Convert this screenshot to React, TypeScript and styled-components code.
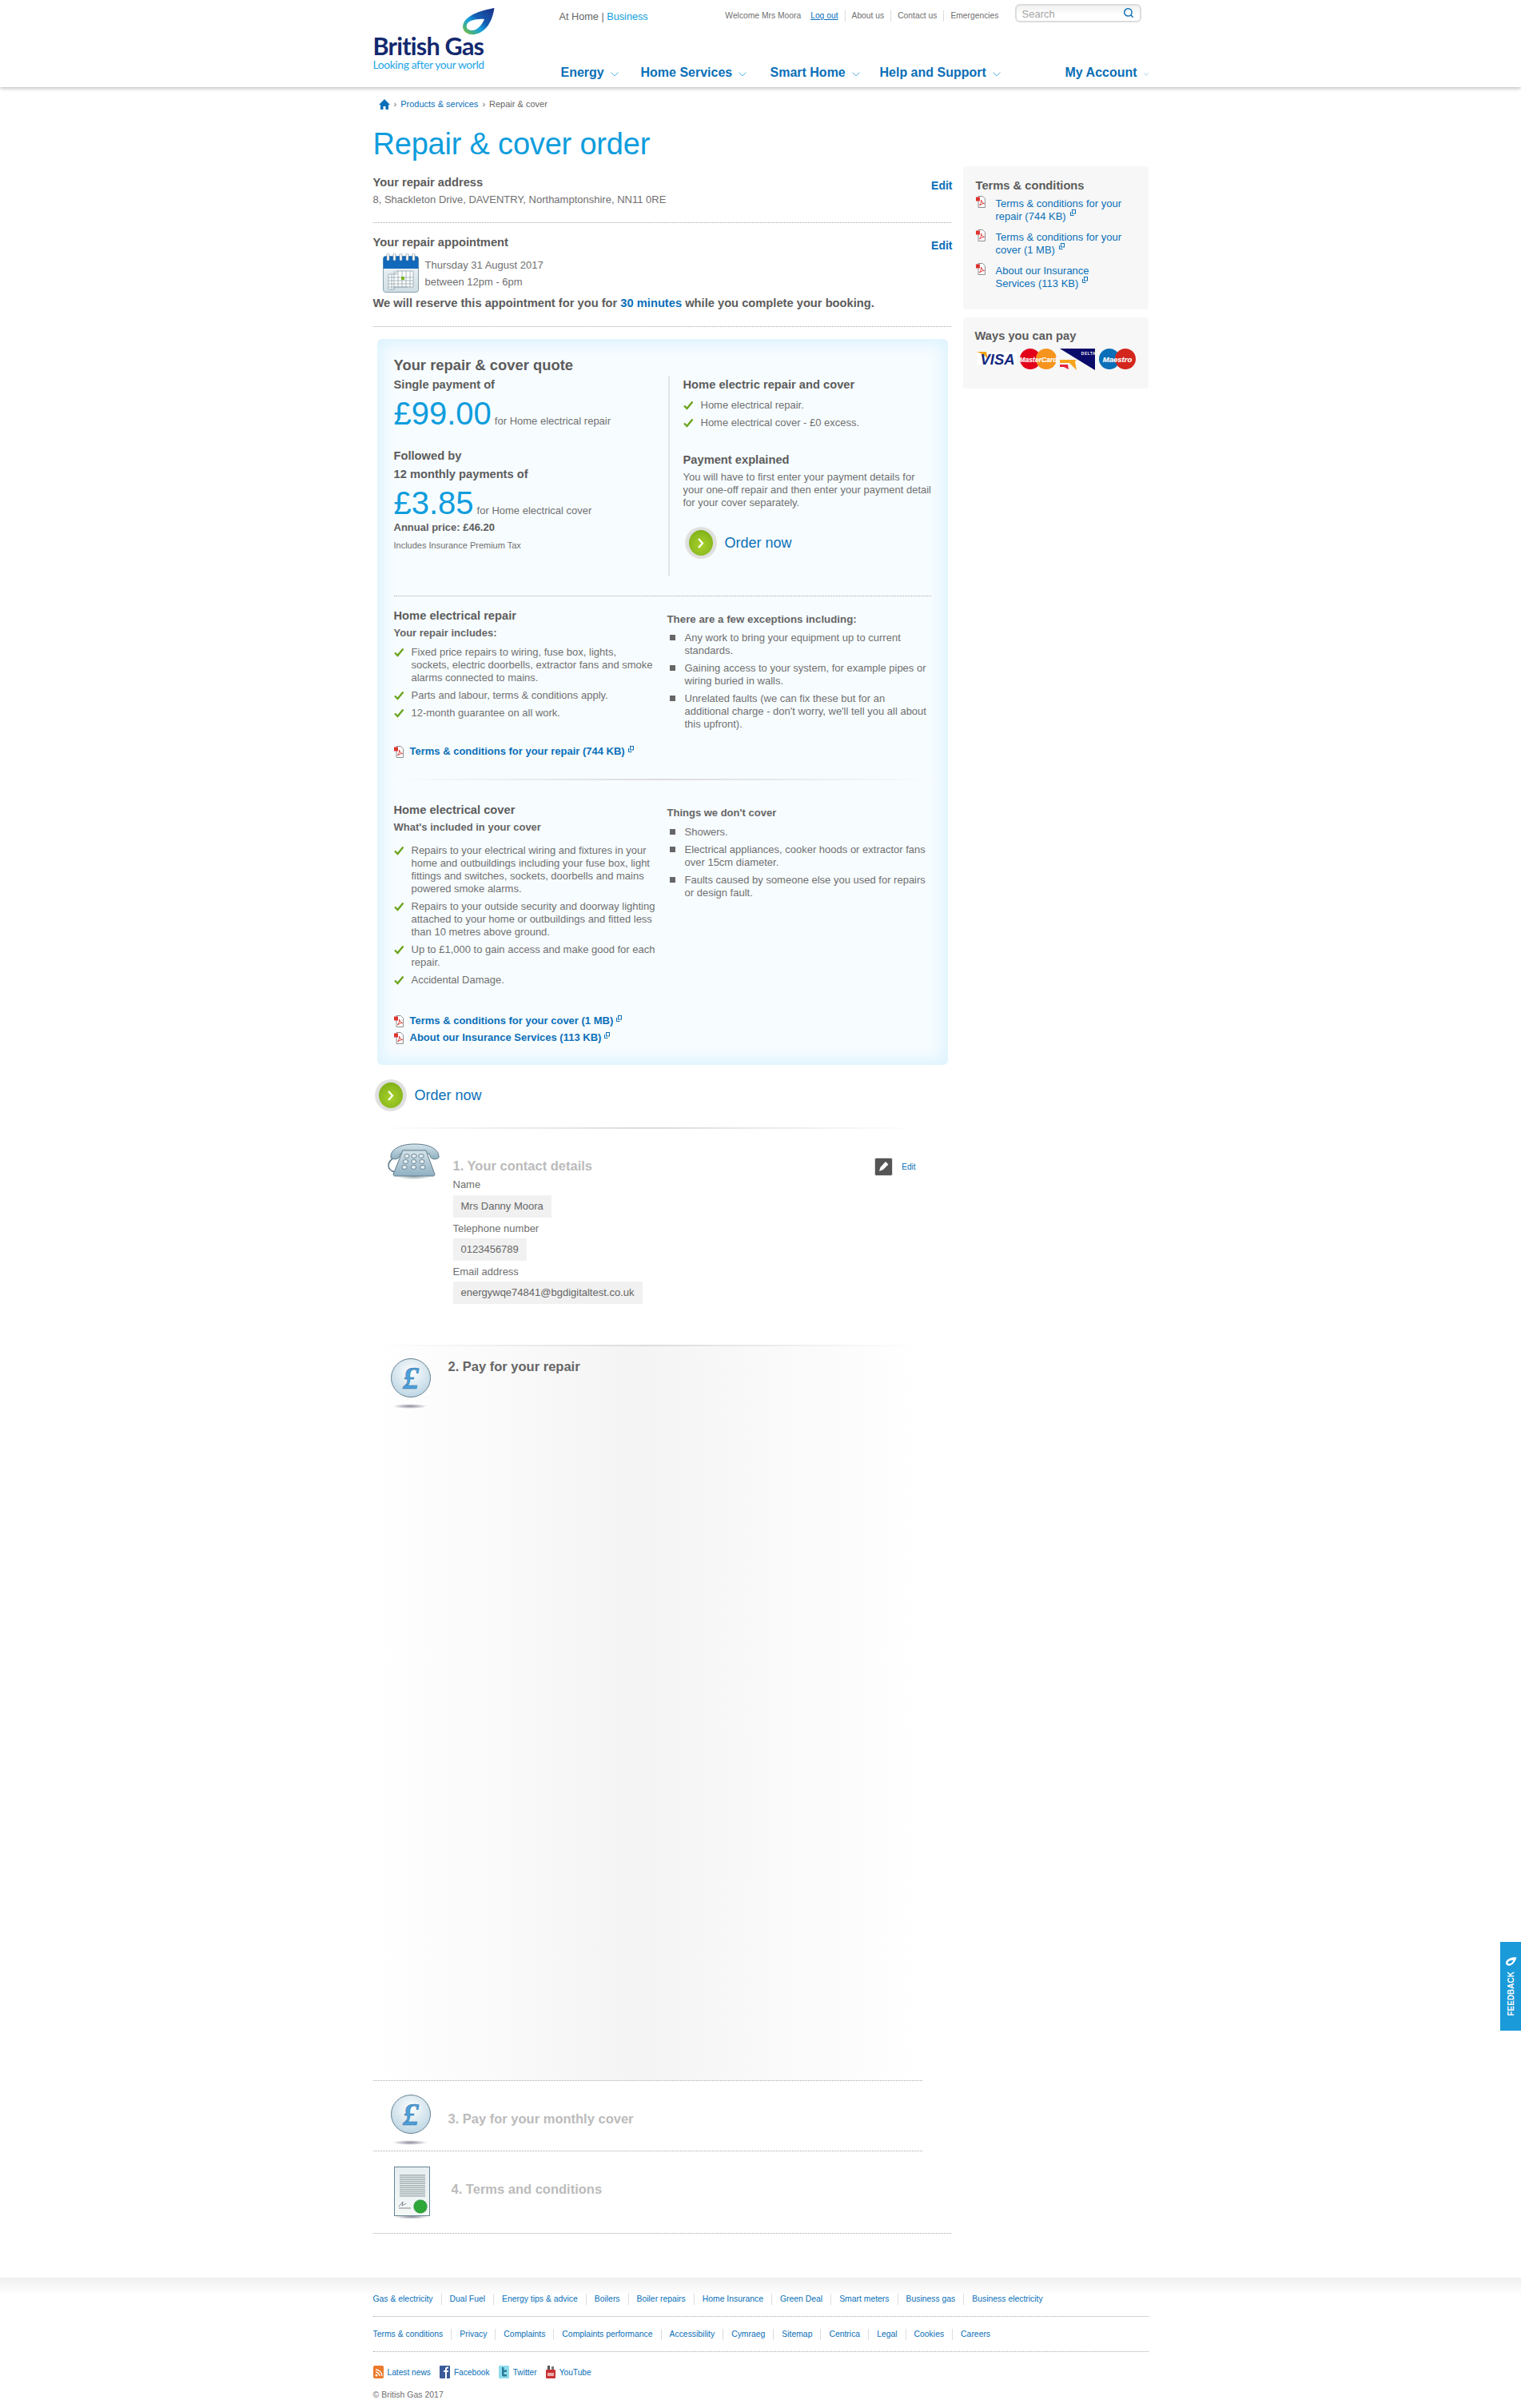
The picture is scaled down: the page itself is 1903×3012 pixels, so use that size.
import React from "react";
import styled, { createGlobalStyle } from "styled-components";
import { Search as SearchGlyph } from "lucide-react";

const Global = createGlobalStyle`
  html, body { margin: 0; padding: 0; background: #fff; }
  body { font-family: "Liberation Sans", Arial, sans-serif; color: #707070; font-size: 13px; }
  * { box-sizing: border-box; }
  a { text-decoration: none; color: inherit; }
  ul, p, h1, h2, h3, h4 { margin: 0; padding: 0; }
  li { list-style: none; }
`;

const LINK = "#0a6fb8";
const SKY = "#0f9ddd";

const Page = styled.div`position: relative; width: 1903px; height: 3012px; overflow: hidden;`;
const HeaderBar = styled.header`height: 109px; background: #fff; box-shadow: 0 1px 5px rgba(0,0,0,.32);position:relative;`;
const Wrap = styled.div`width: 970px; margin: 0 auto;`;
const HeaderInner = styled(Wrap)`display: grid; grid-template-columns: 233px 737px; height: 109px;`;
const LogoBox = styled.a`display: block; padding-top: 10px; width: 160px;`;
const FlameSvg = styled.svg`display: block; margin-left: 111px; width: 41px; height: 35px;`;
const LogoName = styled.div`font-family: "Lato", sans-serif; font-weight: 700; font-size: 30.500px; line-height: 25px; color: #12296e; letter-spacing: -.75px; white-space: nowrap;`;
const LogoTag = styled.div`font-family: "Lato", sans-serif; font-size: 13.800px; line-height: 17px; color: #1ca5e6; letter-spacing: -.35px; white-space: nowrap; margin-top: 2px;`;
const HeaderRight = styled.div`display: flex; flex-direction: column; justify-content: space-between; padding: 5px 0 8px;`;
const TopRow = styled.div`display: flex; align-items: flex-start;`;
const Audience = styled.div`font-size: 12.700px; line-height: 18px; margin-top: 7px; color: #666; b { font-weight: normal; } a { color: ${SKY}; }`;
const Util = styled.ul`display: flex; margin-left: auto; margin-top: 8px; font-size: 10.300px; line-height: 14px; color: #707070;`;
const UtilItem = styled.li<{ $first?: boolean }>`padding: 0 8px; border-left: ${p => p.$first ? "none" : "1px solid #ddd"}; white-space: nowrap; u { color: ${LINK}; margin-left: 12px; }`;
const SearchBox = styled.div`width: 158px; height: 23px; margin: 0 9px 0 12px; border: 2px solid #dcdcdc; border-radius: 6px; background: linear-gradient(#f0f0f0, #fff 60%); display: flex; align-items: center; justify-content: space-between; padding: 2px 7px 0; color: #a5a5a5; font-size: 13px; svg { color: ${LINK}; margin-top: -3px; }`;
const Nav = styled.nav`display: flex; padding-left: 2px;`;
const NavItem = styled.a<{ $w: number }>`width: ${p => p.$w}px; display: flex; align-items: center; gap: 8px; font-size: 16px; font-weight: bold; line-height: 20px; color: ${LINK}; white-space: nowrap;`;
const Crumbs = styled.div`display: flex; align-items: center; height: 14px; margin-top: 14px; padding-left: 7px; font-size: 11px; line-height: 14px; color: #666; gap: 5px; a { color: ${LINK}; }`;
const Title = styled.h1`font-size: 38px; line-height: 46px; font-weight: normal; color: ${SKY}; margin-top: 20px; letter-spacing: -.2px;`;
const Columns = styled.div`display: grid; grid-template-columns: 723px 232px; column-gap: 15px;`;
const MainCol = styled.main`min-width: 0;`;
const Row = styled.div<{ $top: number }>`display: flex; justify-content: space-between; height: ${p => p.$top + 18}px; padding-top: ${p => p.$top}px;`;
const H4 = styled.h4<{ $mt?: number }>`font-size: 14.700px; line-height: 18px; font-weight: bold; color: #5c5c5c; margin-top: ${p => p.$mt ?? 0}px; white-space: nowrap;`;
const EditLink = styled.a`font-size: 14px; line-height: 18px; font-weight: bold; color: ${LINK}; margin-top: 4px; margin-right: -2px;`;
const Address = styled.p`font-size: 13px; line-height: 16px; margin-top: 5px;`;
const Dotted = styled.div<{ $mt: number; $w?: number }>`height: 1px; border-top: 1px dotted #a9a9a9; margin-top: ${p => p.$mt}px; ${p => p.$w ? `width: ${p.$w}px;` : ""}`;
const Appt = styled.div`display: flex; gap: 8px; margin: 5px 0 0 12px;`;
const ApptText = styled.div`font-size: 13px; line-height: 21px; padding-top: 4px;`;
const Reserve = styled.p`font-size: 14.700px; line-height: 18px; font-weight: bold; color: #5c5c5c; margin-top: 4px; span { color: ${LINK}; }`;
const Panel = styled.section`width: 714px; margin: 15px 0 0 5px; padding: 22px 21px 26px; border-radius: 6px; background: #f7fcff; box-shadow: inset 0 0 18px 7px #def3fe;`;
const PanelTitle = styled.h3`font-size: 18.400px; line-height: 22px; font-weight: bold; color: #5c5c5c;`;
const Quote = styled.div`display: grid; grid-template-columns: 345px 327px; margin-top: 2px; height: 250px;`;
const QuoteLeft = styled.div`border-right: 2px solid #dfe5e8; padding-top: 2px;`;
const QuoteRight = styled.div`padding: 2px 0 0 17px;`;
const PriceRow = styled.div<{ $mt: number }>`display: flex; align-items: baseline; gap: 4px; margin-top: ${p => p.$mt}px; font-size: 13px; white-space: nowrap;`;
const Price = styled.span`font-size: 40px; line-height: 46px; color: ${SKY};`;
const Annual = styled.p`font-size: 13px; line-height: 16px; font-weight: bold; color: #5c5c5c;`;
const Small = styled.p`font-size: 11px; line-height: 14px; margin-top: 7px;`;
const Ticks = styled.ul<{ $mt: number; $gap?: number }>`margin-top: ${p => p.$mt}px; display: flex; flex-direction: column; gap: ${p => p.$gap ?? 6}px;`;
const Tick = styled.li`display: flex; gap: 9px; font-size: 13px; line-height: 16px; white-space: nowrap; svg { flex: none; margin-top: 2px; }`;
const Square = styled.i`flex: none; width: 7px; height: 7px; background: #666; margin: 4px 3px 0 3px;`;
const Para = styled.p`font-size: 13px; line-height: 16px; margin-top: 5px; white-space: nowrap;`;
const OrderBtn = styled.a<{ $mt: number }>`display: inline-flex; align-items: center; gap: 10px; margin: ${p => p.$mt}px 0 0 2px; font-size: 18px; line-height: 40px; color: ${LINK};`;
const OrderRing = styled.span`width: 40px; height: 40px; border-radius: 50%; background: radial-gradient(circle, #dedede 60%, #f1f1f1 100%); display: flex; align-items: center; justify-content: center;`;
const OrderDot = styled.span`width: 30px; height: 32px; border-radius: 50%; background: radial-gradient(circle at 50% 60%, #a6d02a, #86b51c 70%, #6f9f12); display: flex; align-items: center; justify-content: center;`;
const DetailGrid = styled.div`display: grid; grid-template-columns: 342px 330px;`;
const SubH = styled.h4<{ $mt: number; $w?: number }>`font-size: ${p => p.$w ?? 13}px; line-height: 18px; font-weight: bold; color: #666; margin-top: ${p => p.$mt}px; white-space: nowrap;`;
const PdfLink = styled.a<{ $mt: number }>`display: flex; align-items: center; gap: 8px; margin-top: ${p => p.$mt}px; font-size: 13px; line-height: 16px; font-weight: bold; color: ${LINK}; white-space: nowrap; sup { line-height: 0; margin-left: -4px; align-self: flex-start; margin-top: 1px; }`;
const Soft = styled.div<{ $mt: number; $w?: number }>`height: 2px; margin-top: ${p => p.$mt}px; width: ${p => p.$w ? `${p.$w}px` : "100%"}; background: linear-gradient(90deg, #fff0, #dcdcdc 50%, #fff0);`;
const StepHead = styled.h3<{ $mute?: boolean }>`font-size: 16.500px; line-height: 20px; font-weight: bold; color: ${p => p.$mute ? "#bbb" : "#666"}; white-space: nowrap;`;
const Contact = styled.section`display: flex; width: 687px; padding-left: 18px;`;
const ContactIcon = styled.div`width: 82px; padding-top: 18px; flex: none;`;
const ContactBody = styled.div`flex: 1; padding-top: 36px;`;
const ContactRow = styled.div`display: flex; justify-content: space-between; height: 20px;`;
const EditGroup = styled.a`display: flex; gap: 11px; padding-right: 8px; font-size: 10px; line-height: 24px; color: ${LINK};`;
const FieldLabel = styled.div<{ $mt?: number }>`font-size: 13px; line-height: 16px; margin-top: ${p => p.$mt ?? 6}px;`;
const FieldValue = styled.div<{ $mt?: number }>`display: table; height: 28px; line-height: 28px; margin-top: ${p => p.$mt ?? 4}px; padding: 0 10px; background: #f1f1f1; font-size: 13px; color: #666;`;
const PayBlock = styled.section`display: flex; width: 687px; height: 918px; padding: 15px 0 0 22px; gap: 22px; background: linear-gradient(90deg, #fff 0%, #f4f4f4 48%, #fff 100%);`;
const PlainStep = styled.section<{ $h: number; $pt: number; $pl: number; $gap: number; $headTop: number }>`display: flex; height: ${p => p.$h}px; padding: ${p => p.$pt}px 0 0 ${p => p.$pl}px; gap: ${p => p.$gap}px; h3 { margin-top: ${p => p.$headTop}px; }`;
const Aside = styled.aside`padding-top: 5px;`;
const SideBox = styled.div<{ $mt?: number }>`background: #f7f7f7; border-radius: 4px; margin-top: ${p => p.$mt ?? 0}px;`;
const TermsBox = styled(SideBox)`height: 179px; padding: 15px 16px 0;`;
const SideList = styled.ul`margin-top: 6px; display: flex; flex-direction: column; gap: 10px;`;
const SideItem = styled.li`display: flex; gap: 13px; font-size: 13px; line-height: 16px; color: ${LINK}; svg:first-child { flex: none; margin-top: -2px; } sup { line-height: 0; margin-left: 5px; }`;
const PayBox = styled(SideBox)`height: 89px; padding: 14px 0 0 15px;`;
const Cards = styled.div`display: flex; align-items: center; margin: 7px 0 0 2px; gap: 4px; height: 26px;`;
const Footer = styled.footer`margin-top: 55px; height: 163px; padding-top: 20px; background: linear-gradient(#f0f0f0, #fff 22px);`;
const FootLinks = styled.ul<{ $mt?: number }>`display: flex; font-size: 10.400px; line-height: 14px; color: ${LINK}; margin-top: ${p => p.$mt ?? 0}px;`;
const FootItem = styled.li<{ $first?: boolean }>`padding: ${p => p.$first ? "0 10px 0 0" : "0 10px"}; border-left: ${p => p.$first ? "none" : "1px solid #ddd"}; white-space: nowrap;`;
const Social = styled.div`display: flex; align-items: center; height: 16px; margin-top: 17px; font-size: 10.200px; color: ${LINK}; gap: 11px;`;
const SocialItem = styled.a`display: flex; align-items: center; gap: 5px;`;
const Copy = styled.p`font-size: 10.500px; line-height: 14px; margin-top: 13px; color: #707070;`;
const Feedback = styled.a`position: absolute; top: 2429px; right: 0; width: 26px; height: 111px; background: #1a9ad9; color: #fff; display: flex; flex-direction: column-reverse; align-items: center; justify-content: center; gap: 6px; font-size: 10px; font-weight: bold; span { writing-mode: vertical-rl; transform: rotate(180deg); }`;

const Flame = () => (
  <FlameSvg viewBox="0 0 41 35">
    <defs>
      <linearGradient id="fl" x1="1" y1="0" x2="0" y2="1">
        <stop offset="0" stopColor="#1b2f86" /><stop offset=".45" stopColor="#1460b4" /><stop offset=".62" stopColor="#16a0e0" /><stop offset=".8" stopColor="#3fb08e" /><stop offset="1" stopColor="#9ac81c" />
      </linearGradient>
    </defs>
    <path d="M40.500 0C26 3 8 7 2 19c-4 9 5 16 14 14C31 30 38 16 40.500 0Z" fill="url(#fl)" />
    <path d="M6 21c1-5 12-8 22-7-3 8-10 15-17 14-4-1-6-3-5-7Z" fill="#fff" />
  </FlameSvg>
);

const Chevron = () => (
  <svg width="10" height="6" viewBox="0 0 10 6" style={{ marginTop: 3 }}><path d="M.5.5 5 5 9.500.5" fill="none" stroke="#57b4e4" strokeWidth="1" /></svg>
);
const Home = () => (
  <svg width="14" height="13" viewBox="0 0 14 13"><path d="M7 0 14 7h-2v6H8.500V9h-3v4H2V7H0Z" fill="#0a6fb8" /></svg>
);
const Pdf = () => (
  <svg width="12" height="15" viewBox="0 0 12 15">
    <path d="M3 .5h5.500L11.500 3.500v11H3Z" fill="#fff" stroke="#8f8f8f" />
    <rect x="0" y="1.500" width="5" height="5" fill="#e0332f" />
    <path d="M4.500 12c2-3 2.500-5 2-7 1 3 2 4 4 4.500-2 0-4 1-6 2.500Z" fill="none" stroke="#d8322d" strokeWidth=".9" />
  </svg>
);
const Ext = () => (
  <svg width="7" height="8" viewBox="0 0 7 8"><rect x="2.500" y=".5" width="4" height="4.500" fill="#fff" stroke="#0a6fb8" /><path d="M.5 3v4.500H4.500" fill="none" stroke="#0a6fb8" /></svg>
);
const Check = () => (
  <svg width="13" height="12" viewBox="0 0 13 12"><path d="M1 6.500 4.500 10 11.500 1.500" fill="none" stroke="#6ba51d" strokeWidth="2.400" /></svg>
);
const Arrow = () => (
  <svg width="9" height="15" viewBox="0 0 9 15"><path d="M2 2l5 5.500L2 13" fill="none" stroke="#fff" strokeWidth="2.200" /></svg>
);
const Calendar = () => (
  <svg width="45" height="49" viewBox="0 0 45 49" style={{ flex: "none" }}>
    <defs><linearGradient id="calb" x1="0" y1="0" x2="0" y2="1"><stop offset="0" stopColor="#f4f8fa" /><stop offset="1" stopColor="#cfdde4" /></linearGradient></defs>
    <rect x=".5" y="3.500" width="44" height="45" rx="3" fill="url(#calb)" stroke="#8aa2ae" />
    <path d="M.5 19V6.500a3 3 0 0 1 3-3h38a3 3 0 0 1 3 3V19Z" fill="#1268bb" />
    {[5, 13, 21, 29, 37].map(x => <rect key={x} x={x} y="0" width="3" height="9" rx="1.500" fill="#fff" stroke="#7b8f9a" strokeWidth=".7" />)}
    <path d="M7 26h10v-4h21v20H14v3H7ZM7 30h31M7 34h31M7 38h31M7 42h24M11 26v19M14 22v23M19 22v20M24 22v20M29 22v20M34 22v20" fill="#fff" stroke="#93a4ad" strokeWidth=".8" />
    <rect x="23" y="29" width="4" height="4" fill="#7ab51d" />
  </svg>
);
const Phone = () => (
  <svg width="65" height="46" viewBox="0 0 65 46">
    <defs>
      <linearGradient id="phb" x1="0" y1="0" x2="0" y2="1"><stop offset="0" stopColor="#d4e3ea" /><stop offset="1" stopColor="#8fb0c2" /></linearGradient>
      <radialGradient id="phs"><stop offset="0" stopColor="#9aa" /><stop offset="1" stopColor="#fff" /></radialGradient>
    </defs>
    <ellipse cx="33" cy="42" rx="22" ry="3.500" fill="url(#phs)" />
    <path d="M10 17C6 19 1 22 1 28c0 5 4 7 8 8" fill="none" stroke="#5e7a8a" strokeWidth="1.500" />
    <path d="M4 18C3 8 15 1 34 1s31 7 30 17c-4 3-8 2-10 0l-2-5H16l-2 5c-2 2-6 3-10 0Z" fill="url(#phb)" stroke="#5e7a8a" />
    <path d="M19 9h29l11 30c0 1-1 2-2 2H9c-1 0-2-1-2-2Z" fill="url(#phb)" stroke="#5e7a8a" />
    {[0, 1, 2].flatMap(r => [0, 1, 2].map(c => <ellipse key={`${r}${c}`} cx={24 + c * 9 - r * 1.500 + c * r * 1.200} cy={16 + r * 7} rx="3.200" ry="2.500" fill="#e4eef2" stroke="#54707f" strokeWidth=".8" />))}
  </svg>
);
const Coin = ({ id }: { id: string }) => (
  <svg width="50" height="66" viewBox="0 0 50 66" style={{ flex: "none" }}>
    <defs>
      <radialGradient id={id} cx=".5" cy=".35" r=".7"><stop offset="0" stopColor="#fff" /><stop offset="1" stopColor="#b8d3e2" /></radialGradient>
      <radialGradient id={id + "s"}><stop offset="0" stopColor="#889" /><stop offset="1" stopColor="#fff" /></radialGradient>
    </defs>
    <ellipse cx="25" cy="24.500" rx="24.500" ry="24" fill={`url(#${id})`} stroke="#65808f" />
    <text x="25" y="38" textAnchor="middle" fontFamily="'Liberation Serif', serif" fontSize="40" fontWeight="bold" fontStyle="italic" fill="#4d9fda" stroke="#2d6f9f" strokeWidth=".5">£</text>
    <ellipse cx="24" cy="60" rx="22" ry="3" fill={`url(#${id}s)`} />
  </svg>
);
const Doc = () => (
  <svg width="45" height="66" viewBox="0 0 45 66" style={{ flex: "none" }}>
    <defs>
      <linearGradient id="dcb" x1="0" y1="0" x2="0" y2="1"><stop offset="0" stopColor="#e7eef1" /><stop offset="1" stopColor="#f4f9f7" /></linearGradient>
      <radialGradient id="dcs"><stop offset="0" stopColor="#889" /><stop offset="1" stopColor="#fff" /></radialGradient>
    </defs>
    <ellipse cx="22" cy="63" rx="21" ry="2.500" fill="url(#dcs)" />
    <rect x=".5" y=".5" width="44" height="61" fill="url(#dcb)" stroke="#668494" />
    {Array.from({ length: 11 }, (_, i) => <rect key={i} x="7" y={10 + i * 2.600} width="32" height="1.600" fill="#a9b3b6" />)}
    <path d="M6 50 11 44 10 49 15 46M6 52h15" fill="none" stroke="#667" strokeWidth=".8" />
    <circle cx="33" cy="50" r="8" fill="#2da838" stroke="#1e8c2c" strokeDasharray="1.500 1" strokeWidth="1.500" />
  </svg>
);
const Pencil = () => (
  <svg width="23" height="23" viewBox="0 0 23 23" style={{ flex: "none" }}>
    <rect x=".5" y=".5" width="22" height="22" rx="2" fill="#555" stroke="#ddd" />
    <path d="M6 17l1.500-5L14 5l3.500 3.500L11 15Z" fill="#fff" />
  </svg>
);
const Visa = () => (
  <svg width="50" height="18" viewBox="0 0 50 18">
    <rect width="50" height="16" fill="#fff" />
    <path d="M0 0h12l2 9C11 5 6 2 0 0Z" fill="#f4a51c" />
    <text x="26" y="15.500" textAnchor="middle" fontFamily="'Liberation Sans', sans-serif" fontSize="18.500" fontWeight="bold" fontStyle="italic" fill="#14297f">VISA</text>
  </svg>
);
const Roundel = ({ a, b, label, size }: { a: string; b: string; label: string; size: number }) => (
  <svg width="46" height="26" viewBox="0 0 46 26">
    <circle cx="13" cy="13" r="13" fill={a} />
    <circle cx="33" cy="13" r="13" fill={b} />
    <text x="23" y="16.500" textAnchor="middle" fontFamily="'Liberation Sans', sans-serif" fontSize={size} fontWeight="bold" fontStyle="italic" fill="#fff" stroke="#fff" strokeWidth=".15">{label}</text>
  </svg>
);
const Delta = () => (
  <svg width="45" height="27" viewBox="0 0 45 27">
    <path d="M0 0h44v27Z" fill="#0b0b6b" />
    <path d="M0 14h21l-2 2 2 11-9-9H0Z" fill="#f7a51c" />
    <path d="M0 20h10l1 6-6-3H0Z" fill="#e8243c" />
    <text x="36" y="8" textAnchor="middle" fontFamily="'Liberation Sans', sans-serif" fontSize="4.800" fontWeight="bold" letterSpacing=".6" fill="#fff">DELTA</text>
  </svg>
);
const Rss = () => (
  <svg width="13" height="16" viewBox="0 0 13 16"><rect width="13" height="16" rx="2" fill="#ec7a2b" /><circle cx="4" cy="12" r="1.500" fill="#fff" /><path d="M3 8a5 5 0 0 1 5 5M3 5a8 8 0 0 1 8 8" fill="none" stroke="#fff" strokeWidth="1.300" /></svg>
);
const Fb = () => (
  <svg width="13" height="16" viewBox="0 0 13 16"><rect width="13" height="16" rx="1" fill="#3a5a98" /><path d="M7 16V8H5V6h2V4c0-1.500 1-2.500 3-2.500h1v2h-1c-.7 0-1 .3-1 1V6h2l-.3 2H9v8Z" fill="#fff" /></svg>
);
const Tw = () => (
  <svg width="13" height="16" viewBox="0 0 13 16"><rect width="13" height="16" rx="1" fill="#8fdcec" /><path d="M4 2h2.500v3.500H10V8H6.500v3H10v2.500H6c-1.500 0-2-1-2-2.500Z" fill="#2a7a9a" /></svg>
);
const Yt = () => (
  <svg width="12" height="16" viewBox="0 0 12 16"><rect y="5" width="12" height="11" rx="1" fill="#c93232" /><rect x="2" y="0" width="3" height="5" fill="#555" /><rect x="7" y="1" width="3" height="4" fill="#777" /><rect x="2" y="9" width="8" height="4" fill="#fff" opacity=".6" /></svg>
);
const Leaf = () => (
  <svg width="15" height="13" viewBox="0 0 13 11"><path d="M12.500 1C8 .5 2.500 2 1 6c-.6 2.500 1.500 4.500 4 4 4-.8 6.500-5 7.500-9ZM3 6.500C4 4.500 7 4 9 4 8 6.500 6.500 8 4.500 8 3.500 8 2.800 7.500 3 6.500Z" fill="#fff" fillRule="evenodd" /></svg>
);

const footerOne = ["Gas & electricity", "Dual Fuel", "Energy tips & advice", "Boilers", "Boiler repairs", "Home Insurance", "Green Deal", "Smart meters", "Business gas", "Business electricity"];
const footerTwo = ["Terms & conditions", "Privacy", "Complaints", "Complaints performance", "Accessibility", "Cymraeg", "Sitemap", "Centrica", "Legal", "Cookies", "Careers"];

const Order = ({ mt }: { mt: number }) => (
  <OrderBtn $mt={mt}><OrderRing><OrderDot><Arrow /></OrderDot></OrderRing>Order now</OrderBtn>
);

export default function App() {
  return (
    <Page>
      <Global />
      <HeaderBar>
        <HeaderInner>
          <LogoBox>
            <Flame />
            <LogoName>British Gas</LogoName>
            <LogoTag>Looking after your world</LogoTag>
          </LogoBox>
          <HeaderRight>
            <TopRow>
              <Audience><b>At Home</b> | <a>Business</a></Audience>
              <Util>
                <UtilItem $first>Welcome Mrs Moora<u>Log out</u></UtilItem>
                <UtilItem>About us</UtilItem>
                <UtilItem>Contact us</UtilItem>
                <UtilItem>Emergencies</UtilItem>
              </Util>
              <SearchBox>Search<SearchGlyph size={14} strokeWidth={2.5} /></SearchBox>
            </TopRow>
            <Nav>
              <NavItem $w={100}>Energy<Chevron /></NavItem>
              <NavItem $w={162}>Home Services<Chevron /></NavItem>
              <NavItem $w={137}>Smart Home<Chevron /></NavItem>
              <NavItem $w={232}>Help and Support<Chevron /></NavItem>
              <NavItem $w={104}>My Account<Chevron /></NavItem>
            </Nav>
          </HeaderRight>
        </HeaderInner>
      </HeaderBar>

      <Wrap>
        <Crumbs><Home />› <a>Products &amp; services</a> › <span>Repair &amp; cover</span></Crumbs>
        <Title>Repair &amp; cover order</Title>
        <Columns>
          <MainCol>
            <Row $top={16}><H4>Your repair address</H4><EditLink>Edit</EditLink></Row>
            <Address>8, Shackleton Drive, DAVENTRY, Northamptonshire, NN11 0RE</Address>
            <Dotted $mt={20} />
            <Row $top={15}><H4>Your repair appointment</H4><EditLink>Edit</EditLink></Row>
            <Appt>
              <Calendar />
              <ApptText>Thursday 31 August 2017<br />between 12pm - 6pm</ApptText>
            </Appt>
            <Reserve>We will reserve this appointment for you for <span>30 minutes</span> while you complete your booking.</Reserve>
            <Dotted $mt={20} />

            <Panel>
              <PanelTitle>Your repair &amp; cover quote</PanelTitle>
              <Quote>
                <QuoteLeft>
                  <H4>Single payment of</H4>
                  <PriceRow $mt={4}><Price>£99.00</Price>for Home electrical repair</PriceRow>
                  <H4 $mt={21}>Followed by</H4>
                  <H4 $mt={5}>12 monthly payments of</H4>
                  <PriceRow $mt={4}><Price>£3.85</Price>for Home electrical cover</PriceRow>
                  <Annual>Annual price: £46.20</Annual>
                  <Small>Includes Insurance Premium Tax</Small>
                </QuoteLeft>
                <QuoteRight>
                  <H4>Home electric repair and cover</H4>
                  <Ticks $mt={9}>
                    <Tick><Check />Home electrical repair.</Tick>
                    <Tick><Check />Home electrical cover - £0 excess.</Tick>
                  </Ticks>
                  <H4 $mt={29}>Payment explained</H4>
                  <Para>You will have to first enter your payment details for<br />your one-off repair and then enter your payment detail<br />for your cover separately.</Para>
                  <Order mt={22} />
                </QuoteRight>
              </Quote>
              <Dotted $mt={25} />
              <DetailGrid>
                <div>
                  <H4 $mt={15}>Home electrical repair</H4>
                  <SubH $mt={4}>Your repair includes:</SubH>
                  <Ticks $mt={7}>
                    <Tick><Check /><span>Fixed price repairs to wiring, fuse box, lights,<br />sockets, electric doorbells, extractor fans and smoke<br />alarms connected to mains.</span></Tick>
                    <Tick><Check />Parts and labour, terms &amp; conditions apply.</Tick>
                    <Tick><Check />12-month guarantee on all work.</Tick>
                  </Ticks>
                  <PdfLink $mt={32}><Pdf />Terms &amp; conditions for your repair (744 KB)<sup><Ext /></sup></PdfLink>
                </div>
                <div>
                  <SubH $mt={20} $w={13.3}>There are a few exceptions including:</SubH>
                  <Ticks $mt={6}>
                    <Tick><Square /><span>Any work to bring your equipment up to current<br />standards.</span></Tick>
                    <Tick><Square /><span>Gaining access to your system, for example pipes or<br />wiring buried in walls.</span></Tick>
                    <Tick><Square /><span>Unrelated faults (we can fix these but for an<br />additional charge - don't worry, we'll tell you all about<br />this upfront).</span></Tick>
                  </Ticks>
                </div>
              </DetailGrid>
              <Soft $mt={26} />
              <DetailGrid>
                <div>
                  <H4 $mt={28}>Home electrical cover</H4>
                  <SubH $mt={4}>What's included in your cover</SubH>
                  <Ticks $mt={12}>
                    <Tick><Check /><span>Repairs to your electrical wiring and fixtures in your<br />home and outbuildings including your fuse box, light<br />fittings and switches, sockets, doorbells and mains<br />powered smoke alarms.</span></Tick>
                    <Tick><Check /><span>Repairs to your outside security and doorway lighting<br />attached to your home or outbuildings and fitted less<br />than 10 metres above ground.</span></Tick>
                    <Tick><Check /><span>Up to £1,000 to gain access and make good for each<br />repair.</span></Tick>
                    <Tick><Check />Accidental Damage.</Tick>
                  </Ticks>
                  <PdfLink $mt={35}><Pdf />Terms &amp; conditions for your cover (1 MB)<sup><Ext /></sup></PdfLink>
                  <PdfLink $mt={5}><Pdf />About our Insurance Services (113 KB)<sup><Ext /></sup></PdfLink>
                </div>
                <div>
                  <SubH $mt={32}>Things we don't cover</SubH>
                  <Ticks $mt={7}>
                    <Tick><Square />Showers.</Tick>
                    <Tick><Square /><span>Electrical appliances, cooker hoods or extractor fans<br />over 15cm diameter.</span></Tick>
                    <Tick><Square /><span>Faults caused by someone else you used for repairs<br />or design fault.</span></Tick>
                  </Ticks>
                </div>
              </DetailGrid>
            </Panel>

            <Order mt={18} />
            <Soft $mt={20} $w={687} />

            <Contact>
              <ContactIcon><Phone /></ContactIcon>
              <ContactBody>
                <ContactRow>
                  <StepHead $mute>1. Your contact details</StepHead>
                  <EditGroup><Pencil />Edit</EditGroup>
                </ContactRow>
                <FieldLabel>Name</FieldLabel>
                <FieldValue $mt={5}>Mrs Danny Moora</FieldValue>
                <FieldLabel>Telephone number</FieldLabel>
                <FieldValue>0123456789</FieldValue>
                <FieldLabel>Email address</FieldLabel>
                <FieldValue>energywqe74841@bgdigitaltest.co.uk</FieldValue>
              </ContactBody>
            </Contact>

            <Soft $mt={51} $w={687} />
            <PayBlock>
              <Coin id="coinA" />
              <StepHead>2. Pay for your repair</StepHead>
            </PayBlock>
            <Dotted $mt={0} $w={687} />
            <PlainStep $h={87} $pt={17} $pl={22} $gap={22} $headTop={20}>
              <Coin id="coinB" />
              <StepHead $mute>3. Pay for your monthly cover</StepHead>
            </PlainStep>
            <Dotted $mt={0} $w={687} />
            <PlainStep $h={102} $pt={19} $pl={26} $gap={27} $headTop={18}>
              <Doc />
              <StepHead $mute>4. Terms and conditions</StepHead>
            </PlainStep>
            <Dotted $mt={0} />
          </MainCol>

          <Aside>
            <TermsBox>
              <H4>Terms &amp; conditions</H4>
              <SideList>
                <SideItem><Pdf /><span>Terms &amp; conditions for your<br />repair (744 KB)<sup><Ext /></sup></span></SideItem>
                <SideItem><Pdf /><span>Terms &amp; conditions for your<br />cover (1 MB)<sup><Ext /></sup></span></SideItem>
                <SideItem><Pdf /><span>About our Insurance<br />Services (113 KB)<sup><Ext /></sup></span></SideItem>
              </SideList>
            </TermsBox>
            <PayBox $mt={10}>
              <H4>Ways you can pay</H4>
              <Cards>
                <Visa />
                <Roundel a="#e3001b" b="#f7941d" label="MasterCard" size={8.6} />
                <Delta />
                <Roundel a="#0a6fb8" b="#d3261d" label="Maestro" size={9.5} />
              </Cards>
            </PayBox>
          </Aside>
        </Columns>
      </Wrap>

      <Footer>
        <Wrap>
          <FootLinks>{footerOne.map((t, i) => <FootItem key={t} $first={i === 0}>{t}</FootItem>)}</FootLinks>
          <Dotted $mt={14} />
          <FootLinks $mt={15}>{footerTwo.map((t, i) => <FootItem key={t} $first={i === 0}>{t}</FootItem>)}</FootLinks>
          <Dotted $mt={14} />
          <Social>
            <SocialItem><Rss />Latest news</SocialItem>
            <SocialItem><Fb />Facebook</SocialItem>
            <SocialItem><Tw />Twitter</SocialItem>
            <SocialItem><Yt />YouTube</SocialItem>
          </Social>
          <Copy>© British Gas 2017</Copy>
        </Wrap>
      </Footer>

      <Feedback><span>FEEDBACK</span><Leaf /></Feedback>
    </Page>
  );
}
